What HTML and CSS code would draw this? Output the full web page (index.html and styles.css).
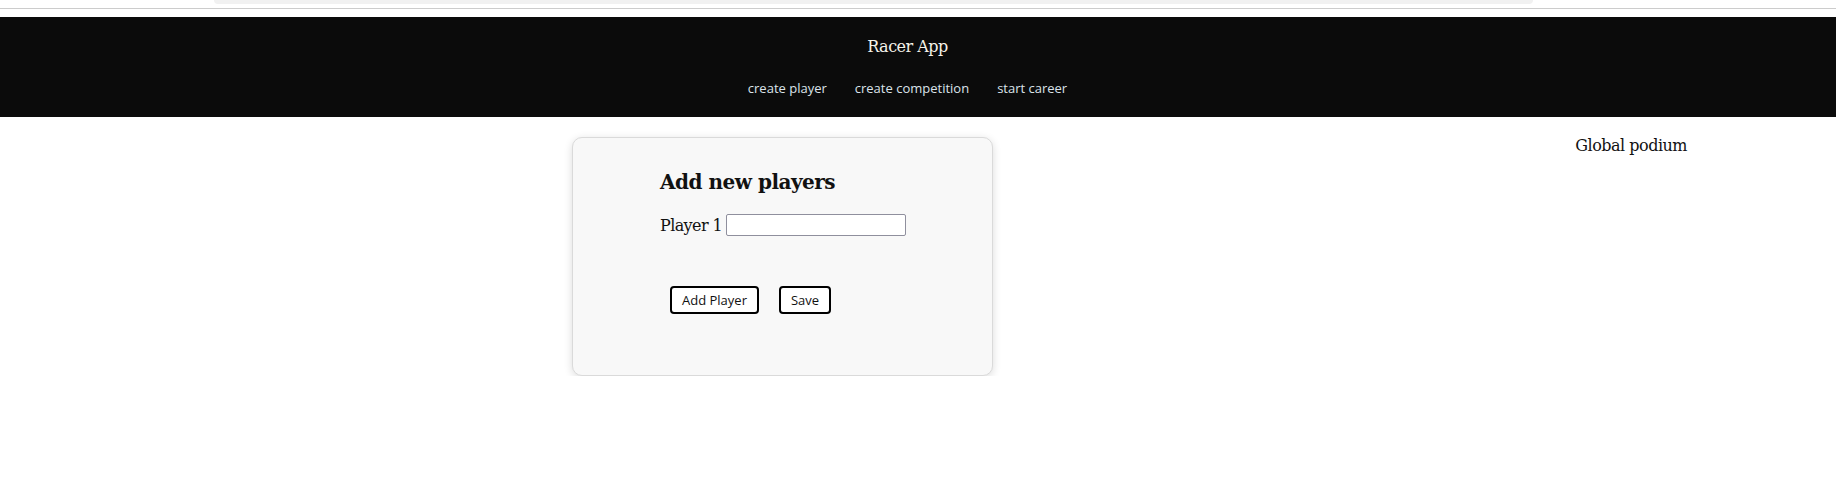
FILE: index.html
```html
<!DOCTYPE html>
<html lang="en">
<head>
<meta charset="utf-8">
<title>Racer App</title>
<link rel="stylesheet" href="styles.css">
</head>
<body>
<div class="chrome">
  <div class="chrome-tab"></div>
  <div class="chrome-line"></div>
</div>
<header class="topbar">
  <h1 class="brand">Racer App</h1>
  <nav class="nav">
    <a class="nav-link" href="#">create player</a>
    <a class="nav-link" href="#">create competition</a>
    <a class="nav-link" href="#">start career</a>
  </nav>
</header>
<main class="main">
  <section class="card">
    <h2 class="card-title">Add new players</h2>
    <div class="field">
      <label class="field-label" for="p1">Player 1</label>
      <input class="field-input" id="p1" type="text">
    </div>
    <div class="actions">
      <button class="btn" type="button">Add Player</button>
      <button class="btn" type="button">Save</button>
    </div>
  </section>
  <aside class="podium">Global podium</aside>
</main>
</body>
</html>
```
FILE: styles.css
```css
* { box-sizing: border-box; }

body {
  margin: 0;
  background: #ffffff;
  color: #111111;
  font-family: "DejaVu Serif", serif;
}

.chrome {
  height: 17px;
  display: flex;
  flex-direction: column;
}

.chrome-tab {
  height: 4px;
  margin: 0 303px 0 214px;
  background: #f1f1f1;
  border-radius: 0 0 6px 6px;
}

.chrome-line {
  height: 1px;
  margin-top: 4px;
  background: #cccccc;
}

.topbar {
  background: #0b0b0b;
  height: 100px;
  padding: 20px 21px 20px 0;
  display: flex;
  flex-direction: column;
  align-items: center;
}

.brand {
  margin: 0;
  font-family: "DejaVu Serif", serif;
  font-weight: normal;
  font-size: 16px;
  line-height: 19px;
  letter-spacing: -0.5px;
  color: #f6f3ea;
}

.nav {
  margin-top: 23px;
  display: flex;
  gap: 28px;
}

.nav-link {
  font-family: "Open Sans", sans-serif;
  font-size: 13px;
  line-height: 18px;
  color: #dbe3ea;
  text-decoration: none;
}

.main {
  display: flex;
  align-items: flex-start;
  padding: 18px 0 0 572px;
}

.card {
  width: 421px;
  margin-top: 2px;
  padding: 32px 20px 61px 87px;
  background: #f8f8f8;
  border: 1px solid #dadada;
  border-radius: 10px;
  box-shadow: 0 2px 8px rgba(0, 0, 0, 0.14);
}

.card-title {
  margin: 0;
  font-family: "DejaVu Serif", serif;
  font-weight: bold;
  font-size: 20px;
  line-height: 24px;
  letter-spacing: -0.5px;
  color: #111111;
}

.field {
  margin-top: 20px;
  display: flex;
  align-items: center;
  gap: 4px;
}

.field-label {
  font-size: 16px;
  line-height: 19px;
  letter-spacing: -0.6px;
}

.field-input {
  width: 180px;
  height: 22px;
  border: 1px solid #8f8f9d;
  border-radius: 2px;
  background: #ffffff;
  padding: 0 4px;
}

.actions {
  margin: 50px 0 0 10px;
  display: flex;
  gap: 20px;
}

.btn {
  height: 28px;
  padding: 0 10px;
  background: #ffffff;
  border: 2px solid #000000;
  border-radius: 4px;
  font-family: "Open Sans", sans-serif;
  font-size: 13px;
  color: #111111;
}

.podium {
  margin-top: 1px;
  margin-left: auto;
  margin-right: 149px;
  font-size: 16px;
  line-height: 19px;
  letter-spacing: -0.5px;
}
```
